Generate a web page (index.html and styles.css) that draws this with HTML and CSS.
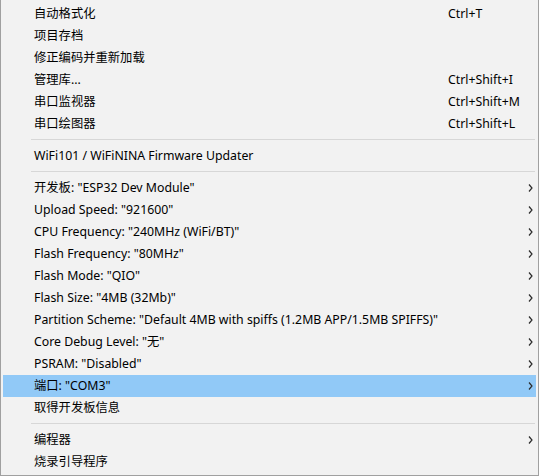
FILE: index.html
```html
<!DOCTYPE html>
<html lang="zh-CN">
<head>
<meta charset="utf-8">
<link rel="stylesheet" href="styles.css">
</head>
<body>
<div class="menu">
  <div class="item"><span class="label">自动格式化</span><span class="shortcut">Ctrl+T</span></div>
  <div class="item"><span class="label">项目存档</span></div>
  <div class="item"><span class="label">修正编码并重新加载</span></div>
  <div class="item"><span class="label">管理库...</span><span class="shortcut">Ctrl+Shift+I</span></div>
  <div class="item"><span class="label">串口监视器</span><span class="shortcut">Ctrl+Shift+M</span></div>
  <div class="item"><span class="label">串口绘图器</span><span class="shortcut">Ctrl+Shift+L</span></div>
  <div class="sep"></div>
  <div class="item"><span class="label">WiFi101 / WiFiNINA Firmware Updater</span></div>
  <div class="sep"></div>
  <div class="item"><span class="label">开发板: "ESP32 Dev Module"</span><svg class="arrow" viewBox="0 0 5 8"><path d="M1 0.5L4 4L1 7.5"/></svg></div>
  <div class="item"><span class="label">Upload Speed: "921600"</span><svg class="arrow" viewBox="0 0 5 8"><path d="M1 0.5L4 4L1 7.5"/></svg></div>
  <div class="item"><span class="label">CPU Frequency: "240MHz (WiFi/BT)"</span><svg class="arrow" viewBox="0 0 5 8"><path d="M1 0.5L4 4L1 7.5"/></svg></div>
  <div class="item"><span class="label">Flash Frequency: "80MHz"</span><svg class="arrow" viewBox="0 0 5 8"><path d="M1 0.5L4 4L1 7.5"/></svg></div>
  <div class="item"><span class="label">Flash Mode: "QIO"</span><svg class="arrow" viewBox="0 0 5 8"><path d="M1 0.5L4 4L1 7.5"/></svg></div>
  <div class="item"><span class="label">Flash Size: "4MB (32Mb)"</span><svg class="arrow" viewBox="0 0 5 8"><path d="M1 0.5L4 4L1 7.5"/></svg></div>
  <div class="item"><span class="label">Partition Scheme: "Default 4MB with spiffs (1.2MB APP/1.5MB SPIFFS)"</span><svg class="arrow" viewBox="0 0 5 8"><path d="M1 0.5L4 4L1 7.5"/></svg></div>
  <div class="item"><span class="label">Core Debug Level: "无"</span><svg class="arrow" viewBox="0 0 5 8"><path d="M1 0.5L4 4L1 7.5"/></svg></div>
  <div class="item"><span class="label">PSRAM: "Disabled"</span><svg class="arrow" viewBox="0 0 5 8"><path d="M1 0.5L4 4L1 7.5"/></svg></div>
  <div class="item active"><span class="label">端口: "COM3"</span><svg class="arrow" viewBox="0 0 5 8"><path d="M1 0.5L4 4L1 7.5"/></svg></div>
  <div class="item"><span class="label">取得开发板信息</span></div>
  <div class="sep"></div>
  <div class="item"><span class="label">编程器</span><svg class="arrow" viewBox="0 0 5 8"><path d="M1 0.5L4 4L1 7.5"/></svg></div>
  <div class="item"><span class="label">烧录引导程序</span></div>
</div>
</body>
</html>
```
FILE: styles.css
```css
html, body {
  margin: 0;
  padding: 0;
  background: #f2f2f2;
}
.menu {
  box-sizing: border-box;
  width: 539px;
  height: 476px;
  background: #f2f2f2;
  border-left: 1px solid #a0a0a0;
  border-right: 1px solid #a0a0a0;
  border-bottom: 1px solid #a0a0a0;
  padding: 3px 2px 2px 2px;
  font-family: "Noto Sans", "Noto Sans CJK SC", sans-serif;
  font-size: 12.3px;
  color: #000;
}
.item {
  display: grid;
  grid-template-columns: 414px 1fr 12px;
  align-items: center;
  height: 22px;
  line-height: 22px;
  padding-left: 31px;
  white-space: nowrap;
}
.item.active {
  background: #91c9f7;
}
.label {
  grid-column: 1;
}
.shortcut {
  grid-column: 2;
}
.arrow {
  grid-column: 3;
  justify-self: end;
  margin-right: 3px;
  width: 5px;
  height: 8px;
  fill: none;
  stroke: #2b2b2b;
  stroke-width: 1.2;
}
.sep {
  height: 10px;
  margin-left: 28px;
  margin-right: 1px;
  display: flex;
  flex-direction: column;
}
.sep::before {
  content: "";
  display: block;
  margin-top: 4px;
  height: 1px;
  background: #d7d7d7;
}
```
